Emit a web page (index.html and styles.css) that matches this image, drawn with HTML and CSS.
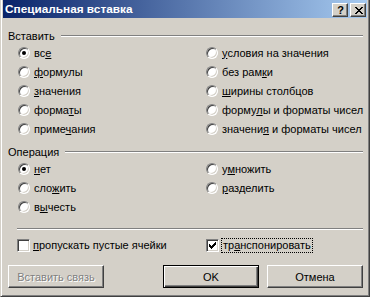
FILE: index.html
```html
<!DOCTYPE html>
<html lang="ru">
<head>
<meta charset="utf-8">
<title>Специальная вставка</title>
<link rel="stylesheet" href="styles.css">
</head>
<body>
<div class="window">
  <div class="titlebar">
    <span class="title">Специальная вставка</span>
    <div class="tbtns">
      <span class="tbtn help">?</span>
      <span class="tbtn close">
        <svg width="8" height="7" viewBox="0 0 8 7" shape-rendering="crispEdges">
          <rect x="0" y="0" width="2" height="1"/><rect x="6" y="0" width="2" height="1"/>
          <rect x="1" y="1" width="2" height="1"/><rect x="5" y="1" width="2" height="1"/>
          <rect x="2" y="2" width="4" height="1"/>
          <rect x="3" y="3" width="2" height="1"/>
          <rect x="2" y="4" width="4" height="1"/>
          <rect x="1" y="5" width="2" height="1"/><rect x="5" y="5" width="2" height="1"/>
          <rect x="0" y="6" width="2" height="1"/><rect x="6" y="6" width="2" height="1"/>
        </svg>
      </span>
    </div>
  </div>
  <div class="body">
    <div class="ghead ghead-first"><span>Вставить</span><i class="etch"></i></div>
    <div class="grid">
      <div class="opt"><span class="radio on"></span><span>вс<u>е</u></span></div>
      <div class="opt"><span class="radio"></span><span><u>у</u>словия на значения</span></div>
      <div class="opt"><span class="radio"></span><span><u>ф</u>ормулы</span></div>
      <div class="opt"><span class="radio"></span><span>без рам<u>к</u>и</span></div>
      <div class="opt"><span class="radio"></span><span><u>з</u>начения</span></div>
      <div class="opt"><span class="radio"></span><span><u>ш</u>ирины столбцов</span></div>
      <div class="opt"><span class="radio"></span><span>форма<u>т</u>ы</span></div>
      <div class="opt"><span class="radio"></span><span>форму<u>л</u>ы и форматы чисел</span></div>
      <div class="opt"><span class="radio"></span><span>приме<u>ч</u>ания</span></div>
      <div class="opt"><span class="radio"></span><span>значени<u>я</u> и форматы чисел</span></div>
    </div>
    <div class="ghead ghead-second"><span>Операция</span><i class="etch"></i></div>
    <div class="grid">
      <div class="opt"><span class="radio on"></span><span><u>н</u>ет</span></div>
      <div class="opt"><span class="radio"></span><span>у<u>м</u>ножить</span></div>
      <div class="opt"><span class="radio"></span><span>сло<u>ж</u>ить</span></div>
      <div class="opt"><span class="radio"></span><span><u>р</u>азделить</span></div>
      <div class="opt"><span class="radio"></span><span>в<u>ы</u>честь</span></div>
    </div>
    <i class="etch sep"></i>
    <div class="checks">
      <div class="opt"><span class="check"></span><span><u>п</u>ропускать пустые ячейки</span></div>
      <div class="opt"><span class="check">
        <svg width="7" height="7" viewBox="0 0 7 7" shape-rendering="crispEdges">
          <rect x="6" y="0" width="1" height="1"/>
          <rect x="5" y="1" width="2" height="1"/>
          <rect x="0" y="2" width="1" height="1"/><rect x="4" y="2" width="3" height="1"/>
          <rect x="0" y="3" width="2" height="1"/><rect x="3" y="3" width="3" height="1"/>
          <rect x="0" y="4" width="5" height="1"/>
          <rect x="1" y="5" width="3" height="1"/>
          <rect x="2" y="6" width="1" height="1"/>
        </svg>
      </span><span class="focus">тр<u>а</u>нспонировать</span></div>
    </div>
    <div class="buttons">
      <span class="btn disabled">Вставить связь</span>
      <span class="spacer"></span>
      <span class="btn default">OK</span>
      <span class="btn">Отмена</span>
    </div>
  </div>
</div>
</body>
</html>
```
FILE: styles.css
```css
html, body {
  margin: 0;
  padding: 0;
  background: #d4d0c8;
}
body {
  font-family: "Liberation Sans", Arial, sans-serif;
  font-size: 11px;
  color: #000;
}
.window {
  box-sizing: border-box;
  width: 370px;
  height: 297px;
  background: #d4d0c8;
  border-left: 1px solid #d4d0c8;
  border-right: 1px solid #404040;
  border-bottom: 1px solid #404040;
  box-shadow: inset 1px 0 #fff, inset -1px -1px #808080;
  padding: 0 1px 1px 2px;
  display: flex;
  flex-direction: column;
}
.titlebar {
  height: 18px;
  margin-right: 1px;
  background: linear-gradient(to right, #0a246a, #a6caf0);
  display: flex;
  align-items: center;
  padding-left: 2px;
}
.title {
  color: #fff;
  font-weight: bold;
  font-size: 11.8px;
  flex: 1;
  line-height: 18px;
}
.tbtns {
  display: flex;
  gap: 2px;
  margin-right: 1px;
  align-self: flex-start;
  margin-top: 3px;
}
.tbtn {
  box-sizing: border-box;
  width: 16px;
  height: 14px;
  background: #d4d0c8;
  border: 1px solid;
  border-color: #fff #404040 #404040 #fff;
  box-shadow: inset -1px -1px #808080;
  display: flex;
  align-items: center;
  justify-content: center;
}
.help {
  font-weight: bold;
  font-size: 11px;
  line-height: 12px;
  font-family: "Liberation Sans", Arial, sans-serif;
  padding-left: 1px;
}
.close svg {
  display: block;
  margin-left: 1px;
}
.body {
  flex: 1;
  display: flex;
  flex-direction: column;
  padding: 0 5px 0 5px;
}
.ghead {
  display: flex;
  align-items: center;
  height: 14px;
}
.ghead-first { margin-top: 11px; }
.ghead-second { margin-top: 7px; }
.ghead .etch {
  flex: 1;
  margin-left: 6px;
}
.etch {
  display: block;
  height: 0;
  border-top: 1px solid #808080;
  border-bottom: 1px solid #fff;
}
.grid {
  display: grid;
  grid-template-columns: 188px 1fr;
  grid-auto-rows: 19px;
  margin-left: 10px;
}
.opt {
  display: flex;
  align-items: center;
  gap: 4px;
  white-space: nowrap;
}
u {
  text-decoration: underline;
  text-underline-offset: 1px;
}
.radio {
  box-sizing: border-box;
  width: 12px;
  height: 12px;
  border-radius: 50%;
  background: #fff;
  border: 1px solid;
  border-color: #808080 #fff #fff #808080;
  box-shadow: inset 1px 1px #404040, inset -1px -1px #d4d0c8;
  display: flex;
  align-items: center;
  justify-content: center;
  flex: none;
}
.radio.on::after {
  content: "";
  width: 4px;
  height: 4px;
  border-radius: 50%;
  background: #000;
}
.sep {
  margin-top: 12px;
  margin-left: 9px;
}
.checks {
  display: grid;
  grid-template-columns: 189px 1fr;
  margin-top: 8px;
  margin-left: 9px;
  height: 14px;
}
.check {
  box-sizing: border-box;
  width: 13px;
  height: 13px;
  background: #fff;
  border: 1px solid;
  border-color: #808080 #fff #fff #808080;
  box-shadow: inset 1px 1px #404040, inset -1px -1px #d4d0c8;
  display: flex;
  align-items: center;
  justify-content: center;
  flex: none;
}
.check svg { display: block; }
.checks .opt { gap: 3px; }
.focus {
  outline: 1px dotted #000;
  padding: 0 1px;
  line-height: 13px;
}
.buttons {
  display: flex;
  gap: 8px;
  margin-top: 13px;
}
.spacer { flex: 1; }
.btn {
  box-sizing: border-box;
  width: 96px;
  height: 23px;
  border: 1px solid;
  border-color: #fff #404040 #404040 #fff;
  box-shadow: inset -1px -1px #808080, inset 1px 1px #d4d0c8;
  display: flex;
  align-items: center;
  justify-content: center;
}
.btn.default {
  border-color: #000;
  box-shadow: inset 1px 1px #fff, inset -1px -1px #404040, inset -2px -2px #808080;
}
.btn.disabled {
  color: #808080;
  text-shadow: 1px 1px #fff;
}
```
